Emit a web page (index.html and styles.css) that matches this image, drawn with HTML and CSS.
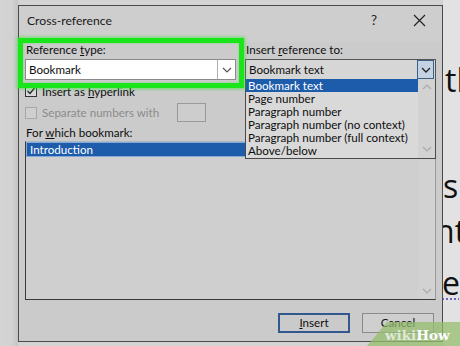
FILE: index.html
```html
<!DOCTYPE html>
<html>
<head>
<meta charset="utf-8">
<link rel="stylesheet" href="styles.css">
</head>
<body>
<div class="stage">
  <div class="gutter"></div>
  <div class="dialog">
    <div class="titlebar">
      <span class="title">Cross-reference</span>
      <span class="help">?</span>
      <span class="close"><svg width="13" height="13" viewBox="0 0 13 13"><path d="M1 1L12 12M12 1L1 12" stroke="#222" stroke-width="1.2" fill="none"/></svg></span>
    </div>
    <div class="body">
      <div class="top-row">
        <div class="col">
          <div class="label">Reference <u>t</u>ype:</div>
          <div class="select select-white">
            <span class="select-text">Bookmark</span>
            <span class="select-btn"><svg width="10" height="6" viewBox="0 0 10 6"><path d="M1 1L5 5L9 1" stroke="#555" stroke-width="1.2" fill="none"/></svg></span>
          </div>
          <div class="check-row">
            <span class="cb"><svg width="10" height="10" viewBox="0 0 10 10"><path d="M1.5 5L4 7.5L8.5 2" stroke="#222" stroke-width="1.3" fill="none"/></svg></span>
            <span>Insert as <u>h</u>yperlink</span>
          </div>
          <div class="check-row check-row-tall disabled">
            <span class="cb cb-disabled"></span>
            <span>Separate numbers with</span>
            <span class="sep-box"></span>
          </div>
        </div>
        <div class="col col-right">
          <div class="label">Insert <u>r</u>eference to:</div>
          <div class="select select-grey">
            <span class="select-text">Bookmark text</span>
            <span class="select-btn select-btn-focus"><svg width="10" height="6" viewBox="0 0 10 6"><path d="M1 1L5 5L9 1" stroke="#222" stroke-width="1.3" fill="none"/></svg></span>
          </div>
          <div class="dropdown">
            <ul class="dropdown-items">
              <li class="selected">Bookmark text</li>
              <li>Page number</li>
              <li>Paragraph number</li>
              <li>Paragraph number (no context)</li>
              <li>Paragraph number (full context)</li>
              <li>Above/below</li>
            </ul>
            <div class="scrollbar">
              <svg width="10" height="6" viewBox="0 0 10 6"><path d="M1 5L5 1L9 5" stroke="#aaa" stroke-width="1.2" fill="none"/></svg>
              <svg width="10" height="6" viewBox="0 0 10 6"><path d="M1 1L5 5L9 1" stroke="#aaa" stroke-width="1.2" fill="none"/></svg>
            </div>
          </div>
        </div>
      </div>
      <div class="label label-list">For <u>w</u>hich bookmark:</div>
      <div class="listbox">
        <div class="list-items">
          <div class="list-item">Introduction</div>
        </div>
        <div class="scrollbar scrollbar-list">
          <svg width="10" height="6" viewBox="0 0 10 6"><path d="M1 1L5 5L9 1" stroke="#aaa" stroke-width="1.2" fill="none"/></svg>
        </div>
      </div>
      <div class="buttons">
        <span class="button button-default"><u>I</u>nsert</span>
        <span class="button">Cancel</span>
      </div>
    </div>
    <div class="highlight"></div>
  </div>
  <div class="doc">
    <div class="doc-line doc-line-1">th</div>
    <div class="doc-line doc-line-2">s</div>
    <div class="doc-line doc-line-3">nt</div>
    <div class="doc-line doc-line-4"><span class="dotted">e</span></div>
  </div>
</div>
<div class="watermark"><span class="wm-wiki">wiki</span><span class="wm-how">How</span></div>
</body>
</html>
```

FILE: styles.css
```css
* { box-sizing: border-box; }
html, body { margin: 0; padding: 0; }
body {
  width: 460px;
  height: 346px;
  overflow: hidden;
  background: #d3d3d3;
  font-family: "Lato", "Open Sans", sans-serif;
  font-size: 11.6px;
  color: #0e0e0e;
  position: relative;
}
.stage {
  display: flex;
  height: 346px;
}
.gutter {
  width: 18px;
  flex: none;
  background: linear-gradient(to right, #d4d4d4 0, #d2d2d2 12px, #c4c4c4 18px);
}
.dialog {
  position: relative;
  width: 425px;
  flex: none;
  margin-top: 5px;
  height: 337px;
  background: #cbcbcb;
  border: 1px solid #4a4a4a;
  display: flex;
  flex-direction: column;
}
.titlebar {
  height: 36px;
  padding-bottom: 8px;
  display: flex;
  align-items: center;
  background: #cecece;
}
.title {
  flex: 1;
  padding-left: 8px;
  font-size: 12.2px;
  color: #1a1a1a;
}
.help {
  width: 30px;
  text-align: center;
  font-size: 13.5px;
  color: #222;
}
.close {
  width: 30px;
  margin-left: 15px;
  margin-right: 8px;
  display: flex;
  justify-content: center;
  align-items: center;
}
.body {
  padding: 0 6px 0 6px;
  display: flex;
  flex-direction: column;
}
.top-row {
  display: flex;
  gap: 9px;
}
.col {
  width: 211px;
  display: flex;
  flex-direction: column;
}
.col-right {
  width: 191px;
  position: relative;
}
.label {
  height: 16px;
  line-height: 16px;
  padding-left: 1px;
  margin-bottom: 1px;
}
.label-list {
  margin-top: 2px;
  margin-bottom: 0;
}
.select {
  height: 21px;
  display: flex;
  align-items: stretch;
  border: 1px solid #6a6a6a;
}
.select-white { background: #ffffff; border-color: #8a8a8a; }
.select-grey { background: #d6d6d6; border-color: #555; }
.select-text {
  flex: 1;
  line-height: 19px;
  padding-left: 3px;
}
.select-btn {
  width: 18px;
  border-left: 1px solid #b0b0b0;
  display: flex;
  align-items: center;
  justify-content: center;
}
.select-btn-focus {
  width: 17px;
  margin: 0 1px 0 0;
  background: #c4d3e3;
  border: 1px solid #3e5f85;
}
.check-row {
  margin-top: 4px;
  height: 14px;
  display: flex;
  align-items: center;
  gap: 5px;
}
.check-row-tall {
  height: 21px;
}
.disabled { color: #8c8c8c; }
.cb {
  width: 12px;
  height: 12px;
  border: 1px solid #333;
  background: #d8d8d8;
  display: flex;
  align-items: center;
  justify-content: center;
}
.cb-disabled {
  border-color: #a8a8a8;
  background: #cfcfcf;
}
.sep-box {
  width: 29px;
  height: 19px;
  margin-left: 13px;
  border: 1px solid #9a9a9a;
  background: #cdcdcd;
}
.dropdown {
  position: absolute;
  top: 37px;
  left: 0;
  width: 191px;
  height: 80px;
  background: #d9d9d9;
  border: 1px solid #4a4a4a;
  border-top: none;
  display: flex;
  z-index: 2;
}
.dropdown-items {
  list-style: none;
  margin: 0;
  padding: 0;
  flex: 1;
}
.dropdown-items li {
  height: 13px;
  line-height: 13px;
  padding-left: 2px;
  white-space: nowrap;
}
.dropdown-items li.selected {
  background: #1c5cab;
  color: #ffffff;
}
.scrollbar {
  width: 17px;
  background: #d2d2d2;
  display: flex;
  flex-direction: column;
  justify-content: space-between;
  align-items: center;
  padding: 5px 0 6px;
}
.listbox {
  height: 159px;
  display: flex;
  background: #cfcfcf;
  border: 1px solid #3a3a3a;
  border-top-color: #aab7c6;
  border-right-color: #9a9a9a;
}
.list-items {
  flex: 1;
}
.list-item {
  height: 15px;
  line-height: 13px;
  padding-left: 3px;
  background: #1c5cab;
  border: 1px solid #86a9d6;
  color: #ffffff;
}
.scrollbar-list {
  justify-content: flex-end;
  padding-bottom: 5px;
}
.buttons {
  margin-top: 13px;
  display: flex;
  justify-content: flex-end;
  gap: 12px;
  padding-right: 2px;
}
.button {
  width: 72px;
  height: 20px;
  line-height: 18px;
  text-align: center;
  border: 1px solid #8a8a8a;
  background: #cfcfcf;
}
.button-default {
  border: 2px solid #31598f;
  line-height: 16px;
  background: #cacaca;
}
.highlight {
  position: absolute;
  left: -1px;
  top: 32px;
  width: 226px;
  height: 50px;
  border: 5px solid #19e51a;
  box-shadow: 0 0 3px 1px rgba(40, 230, 40, 0.6), inset 0 0 2px rgba(40, 230, 40, 0.6);
  z-index: 3;
}
.doc {
  flex: 1;
  background: #e2e2e2;
  font-family: "Open Sans", sans-serif;
  font-size: 32px;
  color: #111;
  overflow: hidden;
}
.doc-line {
  height: 50px;
  line-height: 50px;
  white-space: nowrap;
}
.doc-line-1 { margin-top: 55px; margin-left: 2px; }
.doc-line-2 { margin-top: 56px; margin-left: 0; }
.doc-line-3 { margin-top: -5px; margin-left: -8px; }
.doc-line-4 { margin-top: 2px; margin-left: -1px; }
.dotted {
  text-decoration: underline dotted #6a63c9;
  text-decoration-thickness: 2px;
  text-underline-offset: 3px;
}
.watermark {
  position: absolute;
  right: 0;
  bottom: 0;
  width: 93px;
  height: 24px;
  background: rgba(150, 188, 110, 0.75);
  clip-path: polygon(20px 0, 100% 0, 100% 100%, 0 100%);
  padding-left: 18px;
  font-family: "DejaVu Serif", "Liberation Serif", serif;
  font-weight: bold;
  font-size: 13.5px;
  line-height: 26px;
  white-space: nowrap;
  z-index: 5;
}
.wm-wiki { color: rgba(235, 240, 228, 0.85); }
.wm-how { color: #ffffff; }
```
